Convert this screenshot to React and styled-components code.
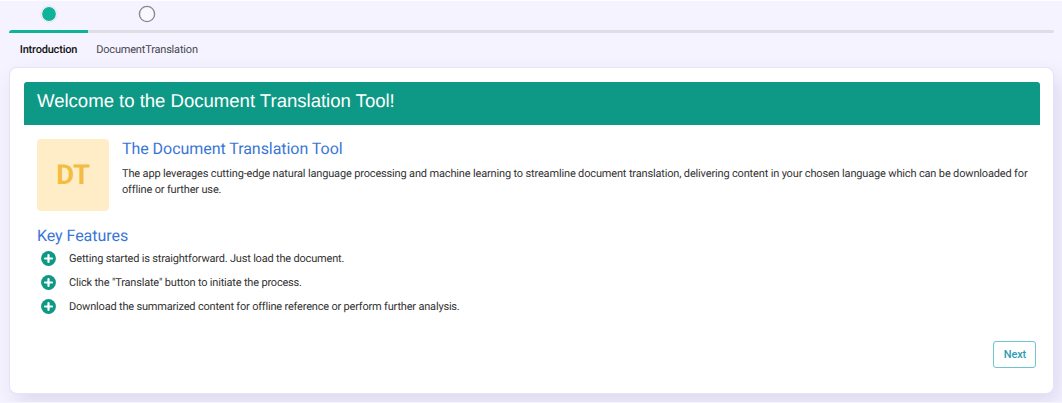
import React from 'react';
import styled, { createGlobalStyle } from 'styled-components';

const GlobalStyle = createGlobalStyle`
  * { box-sizing: border-box; }
  body {
    margin: 0;
    background: #f5f3ff;
    font-family: Roboto, sans-serif;
    color: #333;
    overflow: hidden;
    text-rendering: geometricPrecision;
    letter-spacing: -0.19px;
  }
  h1, h2, p, ul { margin: 0; padding: 0; font-weight: 400; }
`;

const Page = styled.main`
  height: 403px;
  border-top: 1px solid #fff;
  border-bottom: 1px solid #f5f3ff;
  overflow: hidden;
  padding: 0 8px 0 9px;
`;

const Stepper = styled.nav`
  display: flex;
  height: 67px;
`;

const Step = styled.div`
  display: flex;
  flex-direction: column;
  align-items: center;
  flex: none;
  width: ${(p) => p.$width}px;
  padding-top: 4px;
`;

const Dot = styled.svg`
  display: block;
  width: 18px;
  height: 18px;
`;

const Track = styled.span`
  align-self: stretch;
  height: 3px;
  margin-top: 7px;
  background: ${(p) => (p.$active ? '#0fb39a' : '#dce0e4')};
  border-radius: ${(p) => (p.$active ? '3px 0 0 0' : '0')};
`;

const Label = styled.span`
  margin-top: 10px;
  font-size: 11px;
  line-height: 14px;
  font-weight: ${(p) => (p.$active ? 500 : 400)};
  color: ${(p) => (p.$active ? '#111' : '#48484c')};
`;

const TrackRest = styled.span`
  flex: 1;
  height: 3px;
  margin-top: 29px;
  background: #dce0e4;
  border-radius: 0 2px 2px 0;
`;

const Card = styled.section`
  display: flex;
  flex-direction: column;
  width: 1043px;
  height: 325px;
  margin-left: 1px;
  padding: 14px 13px 0 14px;
  background: #fff;
  border-radius: 7px;
  box-shadow: 0 0 0 1px #e7e3f6, 5px 9px 20px rgba(80, 60, 150, 0.15);
`;

const Banner = styled.header`
  height: 43px;
  padding: 8px 13px;
  background: #0d9985;
  border-radius: 3px 3px 0 0;
`;

const BannerTitle = styled.h1`
  font-family: 'Liberation Sans', Arial, sans-serif;
  font-size: 18.6px;
  line-height: 22px;
  letter-spacing: -0.03px;
  color: #fff;
`;

const Content = styled.div`
  padding: 14px 13px 0;
`;

const Intro = styled.div`
  display: flex;
  gap: 13px;
`;

const Monogram = styled.div`
  display: flex;
  align-items: center;
  justify-content: center;
  flex: none;
  width: 72px;
  height: 72px;
  padding-bottom: 2px;
  border-radius: 4px;
  background: #ffedc8;
  color: #f3bd42;
  font-size: 27.5px;
  font-weight: 700;
`;

const Heading = styled.h2`
  font-size: 16px;
  line-height: 20px;
  letter-spacing: -0.05px;
  color: #3a76d6;
`;

const Description = styled.p`
  width: 912px;
  margin-top: 7px;
  font-size: 11px;
  line-height: 16px;
  letter-spacing: -0.158px;
`;

const Features = styled.section`
  margin-top: 15px;
`;

const FeatureList = styled.ul`
  list-style: none;
`;

const Feature = styled.li`
  display: flex;
  align-items: center;
  gap: 13px;
  height: 24px;
  padding-left: 4px;
  font-size: 11px;
`;

const PlusBadge = styled.svg`
  display: block;
  width: 15px;
  height: 15px;
`;

const Footer = styled.footer`
  display: flex;
  justify-content: flex-end;
  margin-top: auto;
  padding: 0 4px 25px 0;
`;

const NextButton = styled.button`
  width: 43px;
  height: 27px;
  padding: 0 0 0 1px;
  border: 1px solid #6cc5cf;
  border-radius: 3px;
  background: #fff;
  color: #2b9db0;
  font: 500 11px Roboto, sans-serif;
  letter-spacing: -0.15px;
`;

const features = [
  'Getting started is straightforward. Just load the document.',
  'Click the "Translate" button to initiate the process.',
  'Download the summarized content for offline reference or perform further analysis.',
];

const Plus = () => (
  <PlusBadge viewBox="0 0 15 15" aria-hidden="true">
    <circle cx="7.5" cy="7.5" r="7.4" fill="#0d9985" />
    <path d="M7.5 4v7M4 7.5h7" stroke="#fff" strokeWidth="2.2" strokeLinecap="round" />
  </PlusBadge>
);

const StepDot = ({ active }) => (
  <Dot viewBox="0 0 18 18" aria-hidden="true">
    <circle
      cx="9"
      cy="9"
      r={active ? 8.1 : 7.6}
      fill={active ? '#fff' : '#f9f8ff'}
      stroke={active ? '#e2e3ea' : '#8a8a8c'}
      strokeWidth={active ? 1 : 1.4}
    />
    {active && <circle cx="9" cy="9" r="6.9" fill="#0fb39a" />}
  </Dot>
);

export default function App() {
  return (
    <>
      <GlobalStyle />
      <Page>
        <Stepper>
          <Step $width={79}>
            <StepDot active />
            <Track $active />
            <Label $active>Introduction</Label>
          </Step>
          <Step $width={118}>
            <StepDot />
            <Track />
            <Label>DocumentTranslation</Label>
          </Step>
          <TrackRest />
        </Stepper>
        <Card>
          <Banner>
            <BannerTitle>Welcome to the Document Translation Tool!</BannerTitle>
          </Banner>
          <Content>
            <Intro>
              <Monogram>DT</Monogram>
              <div>
                <Heading>The Document Translation Tool</Heading>
                <Description>
                  The app leverages cutting-edge natural language processing and machine learning to
                  streamline document translation, delivering content in your chosen language which
                  can be downloaded for offline or further use.
                </Description>
              </div>
            </Intro>
            <Features>
              <Heading>Key Features</Heading>
              <FeatureList>
                {features.map((text) => (
                  <Feature key={text}>
                    <Plus />
                    {text}
                  </Feature>
                ))}
              </FeatureList>
            </Features>
          </Content>
          <Footer>
            <NextButton>Next</NextButton>
          </Footer>
        </Card>
      </Page>
    </>
  );
}
